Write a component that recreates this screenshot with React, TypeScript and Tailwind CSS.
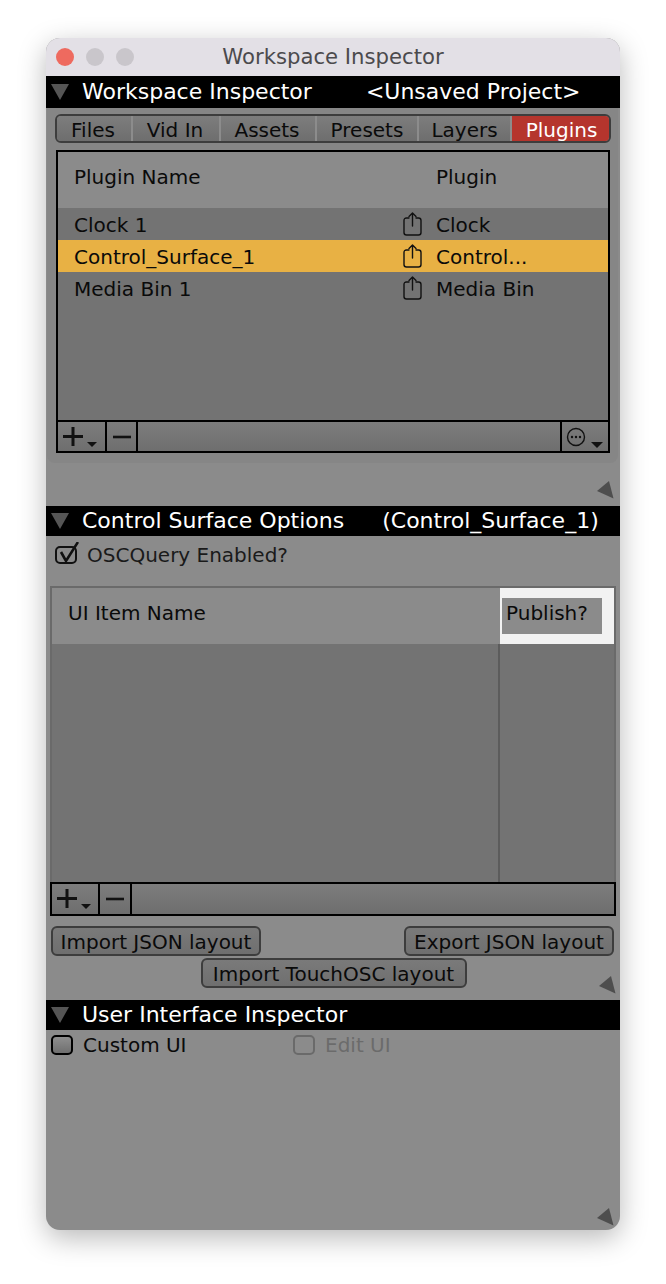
import React from "react";

const Disclosure = () => (
  <svg width="18" height="16" viewBox="0 0 18 16" className="shrink-0">
    <path d="M0 0H18L9 16Z" fill="#555555" />
  </svg>
);

const Grip = () => (
  <svg width="17" height="18" viewBox="0 0 17 18" className="block">
    <path d="M12 0L16.5 17.5L0 10Z" fill="#4e4e4e" />
  </svg>
);

const SectionHeader = ({ title, right, rightClass, height }: { title: string; right?: string; rightClass?: string; height?: string }) => (
  <div className={`flex shrink-0 items-center bg-black pl-[5px] text-[22px] text-white ${height ?? "h-[30px]"}`}>
    <Disclosure />
    <span className="ml-[13px] whitespace-pre">{title}</span>
    {right && <span className={`whitespace-pre ${rightClass}`}>{right}</span>}
  </div>
);

const ShareIcon = () => (
  <svg width="19" height="24" viewBox="0 0 19 24" fill="none" stroke="#111111" strokeWidth="1.4" className="shrink-0">
    <path d="M6 6H3.5Q1 6 1 8.5V20.5Q1 23 3.5 23H15.5Q18 23 18 20.5V8.5Q18 6 15.5 6H13" strokeLinecap="round" />
    <path d="M9.5 14V1M6 4.5L9.5 1L13 4.5" strokeLinecap="round" strokeLinejoin="round" />
  </svg>
);

const PlusMinus = ({ plusWidth, minusWidth }: { plusWidth: string; minusWidth: string }) => (
  <>
    <div className={`relative h-full border-r-2 border-black ${plusWidth}`}>
      <svg width="20" height="19" viewBox="0 0 20 19" className="absolute left-[5px] top-[5px]">
        <path d="M0 9.5H20M10 0V19" stroke="#111111" strokeWidth="3" fill="none" />
      </svg>
      <svg width="10" height="6" viewBox="0 0 10 6" className="absolute left-[29px] top-[20px]">
        <path d="M0 0H10L5 5Z" fill="#111111" />
      </svg>
    </div>
    <div className={`flex h-full items-center justify-center border-r-2 border-black ${minusWidth}`}>
      <svg width="18" height="4" viewBox="0 0 18 4">
        <path d="M0 2H18" stroke="#111111" strokeWidth="2.6" />
      </svg>
    </div>
  </>
);

const Row = ({ name, kind, selected }: { name: string; kind: string; selected?: boolean }) => (
  <div className={`flex h-[32px] items-center ${selected ? "bg-[#e8b144]" : ""}`}>
    <span className="ml-[16px] w-[329px] whitespace-pre pt-[2px]">{name}</span>
    <ShareIcon />
    <span className="ml-[14px] whitespace-pre pt-[2px]">{kind}</span>
  </div>
);

const Tab = ({ label, width, shift }: { label: string; width: string; shift?: string }) => (
  <div className={`flex h-full items-center justify-center border-r-2 border-[#8c8c8c] bg-gradient-to-b from-[#7d7d7d] to-[#6e6e6e] pt-[2px] ${shift ?? "pr-[2px]"} ${width}`}>
    {label}
  </div>
);

const PushButton = ({ label, width }: { label: string; width: string }) => (
  <div className={`flex h-[30px] items-center justify-center rounded-[6px] border-2 border-[#3d3d3d] bg-gradient-to-b from-[#7a7a7a] to-[#6f6f6f] pt-[2px] whitespace-pre ${width}`}>
    {label}
  </div>
);

export default function App() {
  return (
    <div className="h-[1284px] w-[666px] bg-white pl-[46px] pt-[38px] font-['DejaVu_Sans',_'Liberation_Sans',_sans-serif] text-[20px] leading-none text-[#0a0a0a]">
      <div className="flex h-[1192px] w-[574px] flex-col overflow-hidden rounded-[14px] bg-[#8b8b8b] shadow-[0_8px_28px_rgba(0,0,0,0.28)]">
        <div className="relative flex h-[38px] shrink-0 items-center justify-center bg-[#e3e0e6] text-[21.2px] text-[#4b4a4d]">
          <div className="absolute left-[10px] top-[10px] flex gap-[12px]">
            <div className="h-[18px] w-[18px] rounded-full bg-[#ee6a5f]" />
            <div className="h-[18px] w-[18px] rounded-full bg-[#c9c6cb]" />
            <div className="h-[18px] w-[18px] rounded-full bg-[#c9c6cb]" />
          </div>
          Workspace Inspector
        </div>

        <SectionHeader title="Workspace Inspector" right="<Unsaved Project>" rightClass="ml-[54px]" height="h-[32px]" />

        <div className="ml-[1px] mr-[2px] h-[355px] shrink-0 rounded-b-[8px] bg-[#868686] pl-[8px] pt-[6px]">
          <div className="flex h-[29px] w-[556px] overflow-hidden rounded-[6px] border-2 border-[#3d3d3d]">
            <Tab label="Files" width="w-[76px]" />
            <Tab label="Vid In" width="w-[88px]" />
            <Tab label="Assets" width="w-[96px]" />
            <Tab label="Presets" width="w-[102px]" shift="pr-0" />
            <Tab label="Layers" width="w-[93px]" shift="pr-0" />
            <div className="flex flex-1 items-center justify-center bg-[#b5352d] pl-[2px] pt-[2px] text-white">Plugins</div>
          </div>
          <div className="ml-[1px] mt-[7px] flex h-[303px] w-[554px] flex-col border-2 border-black bg-[#737373]">
            <div className="flex h-[56px] shrink-0 items-center bg-[#8b8b8b] pb-[6px]">
              <span className="ml-[16px] w-[362px]">Plugin Name</span>
              <span>Plugin</span>
            </div>
            <div className="flex-1">
              <Row name="Clock 1" kind="Clock" />
              <Row name="Control_Surface_1" kind="Control..." selected />
              <Row name="Media Bin 1" kind="Media Bin" />
            </div>
            <div className="flex h-[31px] shrink-0 items-center border-t-2 border-black bg-gradient-to-b from-[#7d7d7d] to-[#6e6e6e]">
              <PlusMinus plusWidth="w-[49px]" minusWidth="w-[31px]" />
              <div className="flex-1" />
              <div className="relative h-full w-[48px] border-l-2 border-black">
                <svg width="20" height="20" viewBox="0 0 20 20" className="absolute left-[4px] top-[5px]">
                  <circle cx="10" cy="10" r="8.5" fill="none" stroke="#111111" strokeWidth="1.4" />
                  <circle cx="6" cy="10" r="1.2" fill="#111111" />
                  <circle cx="10" cy="10" r="1.2" fill="#111111" />
                  <circle cx="14" cy="10" r="1.2" fill="#111111" />
                </svg>
                <svg width="12" height="6" viewBox="0 0 12 6" className="absolute left-[29px] top-[20px]">
                  <path d="M0 0H12L6 6Z" fill="#111111" />
                </svg>
              </div>
            </div>
          </div>
        </div>

        <div className="flex h-[43px] shrink-0 items-end justify-end pb-[7px] pr-[6px]">
          <Grip />
        </div>

        <SectionHeader title="Control Surface Options" right="(Control_Surface_1)" rightClass="ml-[38px]" />

        <div className="flex h-[38px] shrink-0 items-center pl-[9px] text-[#1a1a1a]">
          <svg width="24" height="26" viewBox="0 0 24 26" className="shrink-0">
            <rect x="1" y="5" width="20" height="16" rx="4" fill="none" stroke="#111111" strokeWidth="2" />
            <path d="M6 10L11 19L23 0" fill="none" stroke="#111111" strokeWidth="2.6" />
          </svg>
          <span className="ml-[8px]">OSCQuery Enabled?</span>
        </div>

        <div className="ml-[4px] mt-[12px] flex h-[296px] w-[566px] shrink-0 flex-col border-x-2 border-t-2 border-[#6a6a6a] bg-[#737373]">
          <div className="flex h-[56px] shrink-0 bg-[#8b8b8b]">
            <span className="ml-[16px] mt-[15px] w-[430px]">UI Item Name</span>
            <div className="ml-[2px] h-full flex-1 bg-[#f2f2f2] py-[10px] pl-[2px] pr-[12px]">
              <div className="flex h-full items-center bg-[#8b8b8b] pb-[6px] pl-[4px]">Publish?</div>
            </div>
          </div>
          <div className="flex flex-1 justify-end">
            <div className="w-[116px] border-l-2 border-[#5c5c5c]" />
          </div>
        </div>
        <div className="ml-[4px] flex h-[34px] w-[566px] shrink-0 items-center border-2 border-black bg-gradient-to-b from-[#7d7d7d] to-[#6e6e6e]">
          <PlusMinus plusWidth="w-[48px]" minusWidth="w-[32px]" />
        </div>

        <div className="relative mx-[5px] mt-[10px] h-[74px] shrink-0">
          <div className="flex justify-between pr-[1px]">
            <PushButton label="Import JSON layout" width="w-[210px]" />
            <PushButton label="Export JSON layout" width="w-[210px]" />
          </div>
          <div className="mt-[2px] flex justify-center pl-[1px]">
            <PushButton label="Import TouchOSC layout" width="w-[266px]" />
          </div>
          <div className="absolute right-[-1px] top-[50px]">
            <Grip />
          </div>
        </div>

        <SectionHeader title="User Interface Inspector" />

        <div className="flex h-[30px] shrink-0 items-center pl-[5px]">
          <div className="h-[20px] w-[22px] shrink-0 rounded-[5px] border-2 border-black bg-gradient-to-b from-[#8f8f8f] to-[#6f6f6f]" />
          <span className="ml-[10px] w-[210px] shrink-0">Custom UI</span>
          <div className="h-[20px] w-[22px] shrink-0 rounded-[5px] border-2 border-[#6a6a6a]" />
          <span className="ml-[10px] text-[#6b6b6b]">Edit UI</span>
        </div>

        <div className="flex flex-1 items-end justify-end pb-[4px] pr-[6px]">
          <Grip />
        </div>
      </div>
    </div>
  );
}
